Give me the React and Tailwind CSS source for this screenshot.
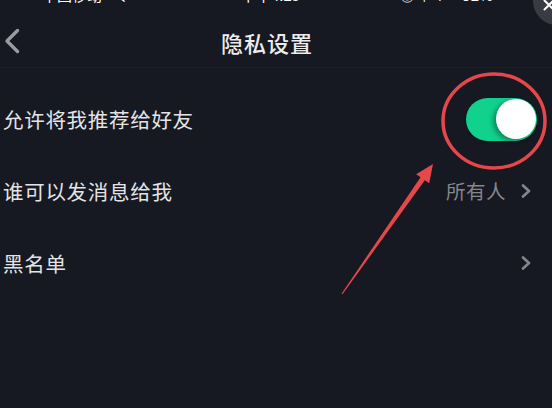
import React from 'react';

const font = { fontFamily: '"Noto Sans CJK SC", "Noto Sans", sans-serif' };

const Chevron = () => (
  <svg width="12" height="14" viewBox="0 0 12 14" className="shrink-0">
    <path d="M3 1.5 L9 7 L3 12.5" fill="none" stroke="#86868c" strokeWidth="2.6" strokeLinecap="round" strokeLinejoin="round" />
  </svg>
);

const Toggle = () => (
  <div className="relative w-[71px] h-[43px] rounded-full bg-[#11d28d] shadow-[0_1px_2px_rgba(0,0,0,0.4)]">
    <div className="absolute right-[1px] top-[1.5px] w-[40px] h-[40px] rounded-full bg-white shadow-[-3px_2px_5px_rgba(0,0,0,0.35)]" />
  </div>
);

const Row = ({ label, children }) => (
  <div className="flex items-center justify-between h-[72px] pl-[3px]">
    <span className="text-[20.5px] text-[#e4e4e6] tracking-[0.7px]">{label}</span>
    {children}
  </div>
);

// red annotation: tapered arrow + ellipse
const tail = [342, 294];
const tip = [433, 164];
const dx = tip[0] - tail[0];
const dy = tip[1] - tail[1];
const len = Math.hypot(dx, dy);
const u = [dx / len, dy / len];
const n = [-u[1], u[0]];
const base = [tip[0] - 18 * u[0], tip[1] - 18 * u[1]];
const pt = (p, k) => `${p[0] + k * n[0]},${p[1] + k * n[1]}`;
const arrowPoints = [
  pt(tail, -0.6),
  pt(base, -2.6),
  pt(base, -8),
  `${tip[0]},${tip[1]}`,
  pt(base, 8),
  pt(base, 2.6),
  pt(tail, 0.6),
].join(' ');

export default function App() {
  return (
    <div className="relative w-[552px] h-[408px] overflow-hidden bg-[#161822] text-white" style={font}>
      {/* status bar, cut off at top */}
      <div className="h-[14px] overflow-hidden">
        <div className="-mt-[17px] h-[24px] flex items-center text-[15px] text-white whitespace-nowrap">
          <span className="ml-[42px]">中国移动</span>
          <span className="ml-[14px] text-[13px]">令</span>
          <span className="ml-[112px]">下午4:25</span>
          <span className="ml-[100px] text-[14px]">◎ ↑ ⇡</span>
          <span className="ml-[16px]">92%</span>
          <span className="ml-[2px] w-[16px] h-[9px] bg-white rounded-[1px]" />
        </div>
      </div>
      <div className="absolute left-[533px] -top-[23px] w-[48px] h-[48px] rounded-full bg-[#393a42] flex items-end justify-start pl-[10px] pb-[14px]">
        <svg width="12" height="12" viewBox="0 0 12 12">
          <path d="M1.5 1.5 L10.5 10.5 M10.5 1.5 L1.5 10.5" stroke="#ffffff" strokeWidth="2" strokeLinecap="round" />
        </svg>
      </div>

      {/* header */}
      <div className="relative h-[54px] flex items-center justify-center pr-[18px] pt-[4px] border-b border-[#1b1d28]">
        <div className="absolute left-[4px] top-[14px]">
          <svg width="16" height="26" viewBox="0 0 16 26">
            <path d="M13.5 2.5 L3 13 L13.5 23.5" fill="none" stroke="#9a9aa0" strokeWidth="3.4" strokeLinecap="round" strokeLinejoin="round" />
          </svg>
        </div>
        <span className="text-[22px] font-medium text-[#ececee] tracking-[1px]">隐私设置</span>
      </div>

      {/* list */}
      <div className="pt-[15px]">
        <Row label="允许将我推荐给好友">
          <div className="mr-[15px]">
            <Toggle />
          </div>
        </Row>
        <Row label="谁可以发消息给我">
          <div className="flex items-center gap-[14px] mr-[20px]">
            <span className="text-[19.5px] text-[#86868c] tracking-[0.5px]">所有人</span>
            <Chevron />
          </div>
        </Row>
        <Row label="黑名单">
          <div className="mr-[20px]">
            <Chevron />
          </div>
        </Row>
      </div>

      {/* annotation overlay */}
      <svg className="absolute inset-0 pointer-events-none" width="552" height="408" viewBox="0 0 552 408">
        <ellipse cx="494" cy="121" rx="51" ry="47" fill="none" stroke="#e6474b" strokeWidth="3.5" />
        <polygon points={arrowPoints} fill="#e6474b" />
      </svg>
    </div>
  );
}
